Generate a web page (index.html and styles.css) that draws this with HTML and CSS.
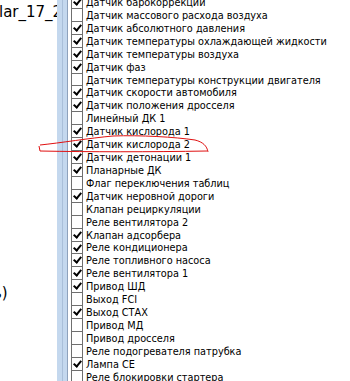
FILE: index.html
```html
<!DOCTYPE html>
<html lang="en">
<head>
    <meta charset="UTF-8">
    <title>Список параметров</title>
    <link rel="stylesheet" href="styles.css">
</head>
<body>
    <div class="window">
        <!-- Left pane, mostly cut off -->
        <div class="left-pane">
            <div class="file-name">lar_17_2</div>
            <div class="tail">ь)</div>
        </div>

        <div class="splitter"><span class="splitter-line"></span></div>

        <!-- Checked list of signals -->
        <ul class="check-list">
            <li class="row on"><span class="box"></span>Датчик барокоррекции</li>
            <li class="row"><span class="box"></span>Датчик массового расхода воздуха</li>
            <li class="row on"><span class="box"></span>Датчик абсолютного давления</li>
            <li class="row on"><span class="box"></span>Датчик температуры охлаждающей жидкости</li>
            <li class="row on"><span class="box"></span>Датчик температуры воздуха</li>
            <li class="row on"><span class="box"></span>Датчик фаз</li>
            <li class="row"><span class="box"></span>Датчик температуры конструкции двигателя</li>
            <li class="row on"><span class="box"></span>Датчик скорости автомобиля</li>
            <li class="row on"><span class="box"></span>Датчик положения дросселя</li>
            <li class="row"><span class="box"></span>Линейный ДК 1</li>
            <li class="row on"><span class="box"></span>Датчик кислорода 1</li>
            <li class="row on"><span class="box"></span>Датчик кислорода 2</li>
            <li class="row on"><span class="box"></span>Датчик детонации 1</li>
            <li class="row on"><span class="box"></span>Планарные ДК</li>
            <li class="row"><span class="box"></span>Флаг переключения таблиц</li>
            <li class="row on"><span class="box"></span>Датчик неровной дороги</li>
            <li class="row"><span class="box"></span>Клапан рециркуляции</li>
            <li class="row"><span class="box"></span>Реле вентилятора 2</li>
            <li class="row on"><span class="box"></span>Клапан адсорбера</li>
            <li class="row on"><span class="box"></span>Реле кондиционера</li>
            <li class="row on"><span class="box"></span>Реле топливного насоса</li>
            <li class="row on"><span class="box"></span>Реле вентилятора 1</li>
            <li class="row on"><span class="box"></span>Привод ШД</li>
            <li class="row"><span class="box"></span>Выход FCI</li>
            <li class="row on"><span class="box"></span>Выход СТАХ</li>
            <li class="row"><span class="box"></span>Привод МД</li>
            <li class="row"><span class="box"></span>Привод дросселя</li>
            <li class="row"><span class="box"></span>Реле подогревателя патрубка</li>
            <li class="row on"><span class="box"></span>Лампа СЕ</li>
            <li class="row"><span class="box"></span>Реле блокировки стартера</li>
        </ul>

        <!-- Hand-drawn red mark around one item -->
        <svg class="scribble" width="350" height="381" viewBox="0 0 350 381">
            <path d="M40 145 C60 143 90 138 113 136 C140 135 175 137 195 140 C203 142 207 146 208 152 M207 151 C150 152 90 152 40 151 L39 146"
                  fill="none" stroke="#e01010" stroke-width="1"/>
        </svg>
    </div>
</body>
</html>
```

FILE: styles.css
```css
/* ===== Base ===== */
body {
    margin: 0;
    background: #fff;
}

.window {
    position: relative;
    display: flex;
    width: 350px;
    height: 381px;
    overflow: hidden;
}

/* ===== Left pane ===== */
.left-pane {
    width: 57px;
    flex-shrink: 0;
    overflow: hidden;
    font-family: "DejaVu Sans", sans-serif;
    font-size: 15px;
    color: #000;
}

.file-name {
    margin-top: 3px;
    margin-left: -1px;
    white-space: nowrap;
}

.tail {
    margin-top: 263px;
    margin-left: -7px;
    white-space: nowrap;
}

/* ===== Splitter ===== */
.splitter {
    width: 10px;
    flex-shrink: 0;
    display: flex;
    justify-content: center;
    background: #c4d8ee;
    border-right: 1px solid #8ea2bc;
}

.splitter-line {
    width: 1px;
    background: #a9bfd9;
}

/* ===== Check list ===== */
.check-list {
    list-style: none;
    margin: -4px 0 0;
    padding: 0 0 0 3px;
    font-family: "DejaVu Sans Condensed", "DejaVu Sans", sans-serif;
    font-stretch: condensed;
    font-size: 10.8px;
    color: #000;
}

.row {
    display: flex;
    align-items: center;
    height: 12.93px;
    white-space: nowrap;
}

.box {
    position: relative;
    width: 12px;
    height: 100%;
    box-sizing: border-box;
    border-left: 1px solid #6f6f6f;
    border-right: 1px solid #6f6f6f;
    border-bottom: 1px solid #6f6f6f;
    margin-right: 3px;
    flex-shrink: 0;
}

.row.on .box::after {
    content: "";
    position: absolute;
    left: 3px;
    top: 1px;
    width: 3px;
    height: 6px;
    border-right: 2px solid #000;
    border-bottom: 2px solid #000;
    transform: rotate(40deg);
}

/* ===== Red marker ===== */
.scribble {
    position: absolute;
    left: 0;
    top: 0;
    pointer-events: none;
}
```
